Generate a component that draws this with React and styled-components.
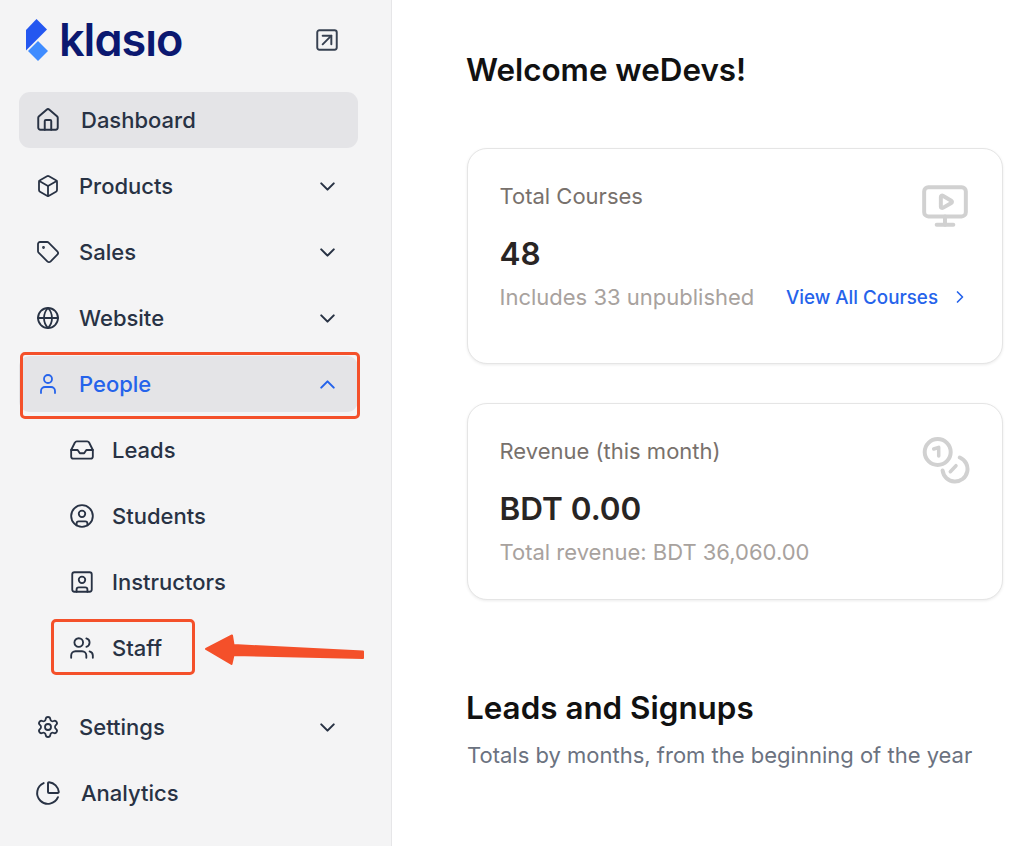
import styled, { createGlobalStyle } from 'styled-components'
import {
  Box, ChartPie, ChevronDown, ChevronRight, ChevronUp, CircleUser, House, Inbox,
  Globe, MonitorPlay, Settings, SquareArrowUpRight, SquareUser, Tag, User, Users,
} from 'lucide-react'

const GlobalStyle = createGlobalStyle`
  html, body {
    margin: 0;
    height: 100%;
    background: #fff;
    font-family: Inter, "Liberation Sans", sans-serif;
  }
  * { box-sizing: border-box; }
`

const Page = styled.div`
  display: flex;
  width: 1024px;
  height: 846px;
  overflow: hidden;
`

const Sidebar = styled.aside`
  width: 392px;
  flex-shrink: 0;
  padding: 0 33px 0 19px;
  background: #f4f4f5;
  border-right: 1px solid #e6e6e8;
`

const Brand = styled.div`
  height: 92px;
  padding: 0 18px 12px 7px;
  display: flex;
  align-items: center;
  justify-content: space-between;
  color: #374151;
`

const LogoWrap = styled.div`
  display: flex;
  align-items: center;
  gap: 10px;
`

const LogoText = styled.span`
  font-size: 45px;
  line-height: 50px;
  font-weight: 600;
  letter-spacing: -1px;
  font-feature-settings: "cv11";
  color: #0b1870;
`

const Nav = styled.nav`
  display: flex;
  flex-direction: column;
  gap: 10px;
`

const SubNav = styled.div`
  display: flex;
  flex-direction: column;
  align-items: flex-start;
  gap: 10px;
  margin-bottom: 13px;
`

const Row = styled.div`
  position: relative;
  height: 56px;
  display: flex;
  align-items: center;
  gap: ${p => (p.$sub ? '17.4px' : p.$wide ? '20px' : '19px')};
  padding: ${p => (p.$sub ? '0 33px 0 17.6px' : p.$wide ? '0 18.5px 0 16px' : '0 18.5px 0 17px')};
  margin-left: ${p => (p.$sub ? '32px' : '0')};
  border-radius: 11px;
  font-size: 22px;
  font-weight: 500;
  color: ${p => (p.$open ? '#2563eb' : '#283244')};
  background: ${p => (p.$active ? '#e4e4e7' : 'transparent')};

  svg { flex-shrink: 0; }
`

const RowLabel = styled.span`
  flex: 1;
`

const Marker = styled.span`
  position: absolute;
  inset: ${p => p.$inset};
  border: 3px solid #f4502a;
  border-radius: 5px;
  pointer-events: none;
`

const ArrowMark = styled.svg`
  position: absolute;
  left: 100%;
  top: 10px;
  margin-left: 8px;
`

const Main = styled.main`
  flex: 1;
  padding: 49px 21px 0 75px;
`

const Title = styled.h1`
  margin: 0 0 0 -1px;
  font-size: 31.4px;
  line-height: 42px;
  font-weight: 600;
  color: #111;
`

const Cards = styled.div`
  display: flex;
  flex-direction: column;
  gap: 39px;
  margin-top: 57px;
`

const Card = styled.section`
  min-height: ${p => (p.$tall ? '216px' : '197px')};
  padding: 32px 32px 32px 31.5px;
  background: #fff;
  border: 1.5px solid #e5e5e5;
  border-radius: 20px;
  box-shadow: 0 1px 3px rgba(0, 0, 0, 0.08);
`

const CardHead = styled.div`
  height: 30px;
  display: flex;
  align-items: flex-start;
  justify-content: space-between;
  color: #d1d1d1;
`

const CardLabel = styled.div`
  font-size: 22px;
  line-height: 30px;
  color: #78716c;
`

const CardValue = styled.div`
  margin-top: 23px;
  font-size: 31.5px;
  line-height: 40px;
  font-weight: 600;
  color: #292524;
`

const CardFoot = styled.div`
  margin-top: 8px;
  display: flex;
  align-items: center;
  justify-content: space-between;
`

const CardNote = styled.div`
  font-size: 22px;
  line-height: 30px;
  color: #a8a29e;
`

const CardLink = styled.a`
  display: flex;
  align-items: center;
  gap: 12px;
  font-size: 18.8px;
  font-weight: 500;
  color: #2563eb;
`

const Section = styled.div`
  margin-top: 87px;
`

const SectionTitle = styled.h2`
  margin: 0 0 0 -1px;
  font-size: 31.4px;
  line-height: 42px;
  font-weight: 600;
  color: #111;
`

const SectionNote = styled.p`
  margin: 11px 0 0;
  font-size: 22px;
  line-height: 30px;
  color: #6b7280;
`

function LogoMark() {
  return (
    <svg width="23" height="43" viewBox="0 0 23 43">
      <path d="M10.5 0 21 10.5 0 31.5V11Z" fill="#2457f0" />
      <path d="M12 22 22 32 12 42 2 32Z" fill="#3f8cff" />
    </svg>
  )
}

function CoinsIcon() {
  return (
    <svg width="48" height="48" viewBox="0 0 48 48" fill="none" stroke="currentColor" strokeWidth="4" strokeLinecap="round" strokeLinejoin="round">
      <circle cx="15.7" cy="16" r="13" />
      <path d="M11.7 13 16.7 11.3V20" strokeWidth="3.5" />
      <path d="M37.8 21.5A12.5 12.5 0 1 1 20.6 34.6" />
      <path d="M28.3 35.7 34 29.7" strokeWidth="3.5" />
    </svg>
  )
}

const mainItems = [
  { label: 'Products', icon: Box },
  { label: 'Sales', icon: Tag },
  { label: 'Website', icon: Globe },
]

const subItems = [
  { label: 'Leads', icon: Inbox },
  { label: 'Students', icon: CircleUser },
  { label: 'Instructors', icon: SquareUser },
]

export default function App() {
  return (
    <Page>
      <GlobalStyle />
      <Sidebar>
        <Brand>
          <LogoWrap>
            <LogoMark />
            <LogoText>klasıo</LogoText>
          </LogoWrap>
          <SquareArrowUpRight size={26} strokeWidth={1.8} />
        </Brand>
        <Nav>
          <Row $active $wide>
            <House size={26} strokeWidth={1.8} />
            <RowLabel>Dashboard</RowLabel>
          </Row>
          {mainItems.map(({ label, icon: Icon }) => (
            <Row key={label}>
              <Icon size={24} strokeWidth={1.8} />
              <RowLabel>{label}</RowLabel>
              <ChevronDown size={25} strokeWidth={2} />
            </Row>
          ))}
          <Row $active $open>
            <User size={24} strokeWidth={1.8} />
            <RowLabel>People</RowLabel>
            <ChevronUp size={25} strokeWidth={2} />
            <Marker $inset="-4px -2px -7px 1px" />
          </Row>
          <SubNav>
            {subItems.map(({ label, icon: Icon }) => (
              <Row $sub key={label}>
                <Icon size={26} strokeWidth={1.7} />
                <span>{label}</span>
              </Row>
            ))}
            <Row $sub>
              <Users size={26} strokeWidth={1.7} />
              <span>Staff</span>
              <Marker $inset="-1px 0 1px 0" />
              <ArrowMark width="166" height="38" viewBox="0 0 166 38">
                <path d="M3 19 29 5.5 30.5 15 160 21.5V28 L30.5 25 28.5 34Z" fill="#f4502a" stroke="#f4502a" strokeWidth="2" strokeLinejoin="round" />
              </ArrowMark>
            </Row>
          </SubNav>
          <Row>
            <Settings size={24} strokeWidth={1.8} />
            <RowLabel>Settings</RowLabel>
            <ChevronDown size={25} strokeWidth={2} />
          </Row>
          <Row $wide>
            <ChartPie size={26} strokeWidth={1.8} />
            <RowLabel>Analytics</RowLabel>
          </Row>
        </Nav>
      </Sidebar>
      <Main>
        <Title>Welcome weDevs!</Title>
        <Cards>
          <Card $tall>
            <CardHead>
              <CardLabel>Total Courses</CardLabel>
              <MonitorPlay size={50} strokeWidth={1.9} />
            </CardHead>
            <CardValue>48</CardValue>
            <CardFoot>
              <CardNote>Includes 33 unpublished</CardNote>
              <CardLink>
                View All Courses
                <ChevronRight size={20} strokeWidth={2} />
              </CardLink>
            </CardFoot>
          </Card>
          <Card>
            <CardHead>
              <CardLabel>Revenue (this month)</CardLabel>
              <CoinsIcon />
            </CardHead>
            <CardValue>BDT 0.00</CardValue>
            <CardFoot>
              <CardNote>Total revenue: BDT 36,060.00</CardNote>
            </CardFoot>
          </Card>
        </Cards>
        <Section>
          <SectionTitle>Leads and Signups</SectionTitle>
          <SectionNote>Totals by months, from the beginning of the year</SectionNote>
        </Section>
      </Main>
    </Page>
  )
}
